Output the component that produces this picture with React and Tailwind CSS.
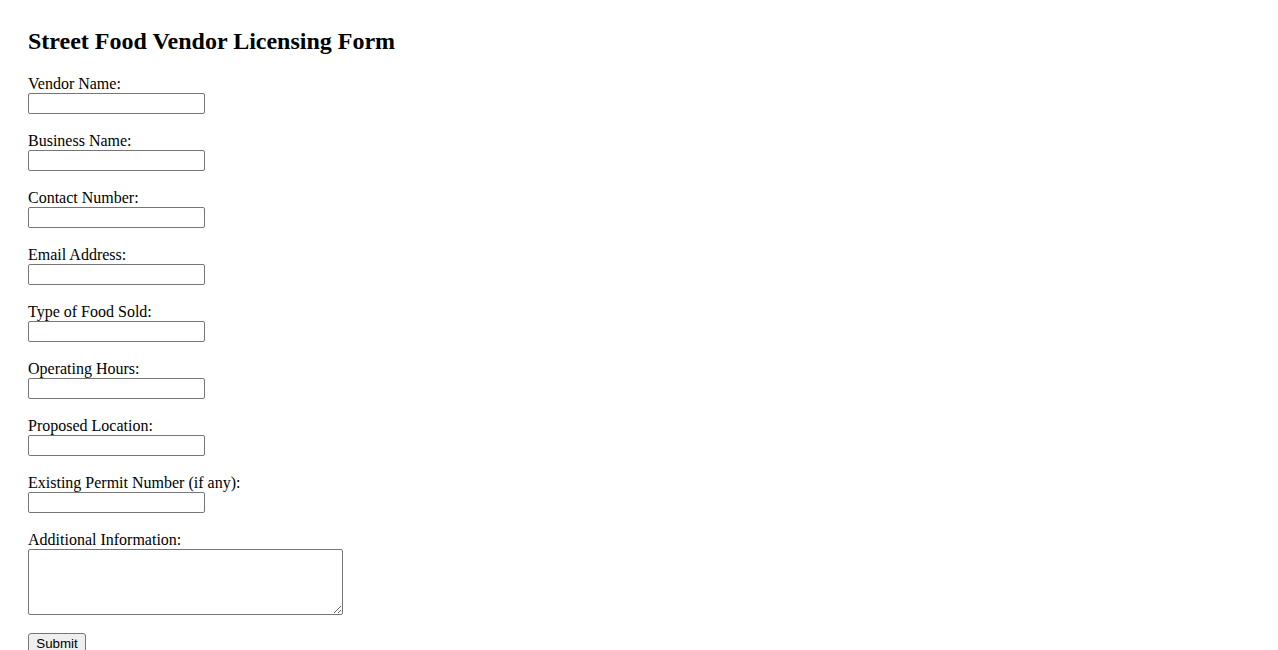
const fields = [
  "Vendor Name:",
  "Business Name:",
  "Contact Number:",
  "Email Address:",
  "Type of Food Sold:",
  "Operating Hours:",
  "Proposed Location:",
  "Existing Permit Number (if any):",
];

export default function App() {
  return (
    <div className="bg-white min-h-screen px-[28px] pt-[27px] text-black font-['Liberation_Serif',serif]">
      <h2 className="text-[24px] font-bold leading-[28px] mb-[19px]">
        Street Food Vendor Licensing Form
      </h2>
      <form>
        {fields.map((f, i) => (
          <div key={i} className="mb-[17px]">
            <label className="block text-[16px] leading-[19px]">{f}</label>
            <input
              type="text"
              className="block w-[177px] h-[21px] border border-[#767676] rounded-[2px] px-[2px] text-[13px]"
            />
          </div>
        ))}
        <div className="mb-[18px]">
          <label className="block text-[16px] leading-[19px]">Additional Information:</label>
          <textarea className="block w-[315px] h-[66px] border border-[#767676] rounded-[2px] resize" />
        </div>
        <button
          type="submit"
          className="block bg-[#efefef] border border-[#767676] rounded-[3px] px-[6px] py-[1px] text-[13.33px] leading-[16px] font-['Liberation_Sans',sans-serif] w-[58px] h-[21px]"
        >
          Submit
        </button>
      </form>
    </div>
  );
}
